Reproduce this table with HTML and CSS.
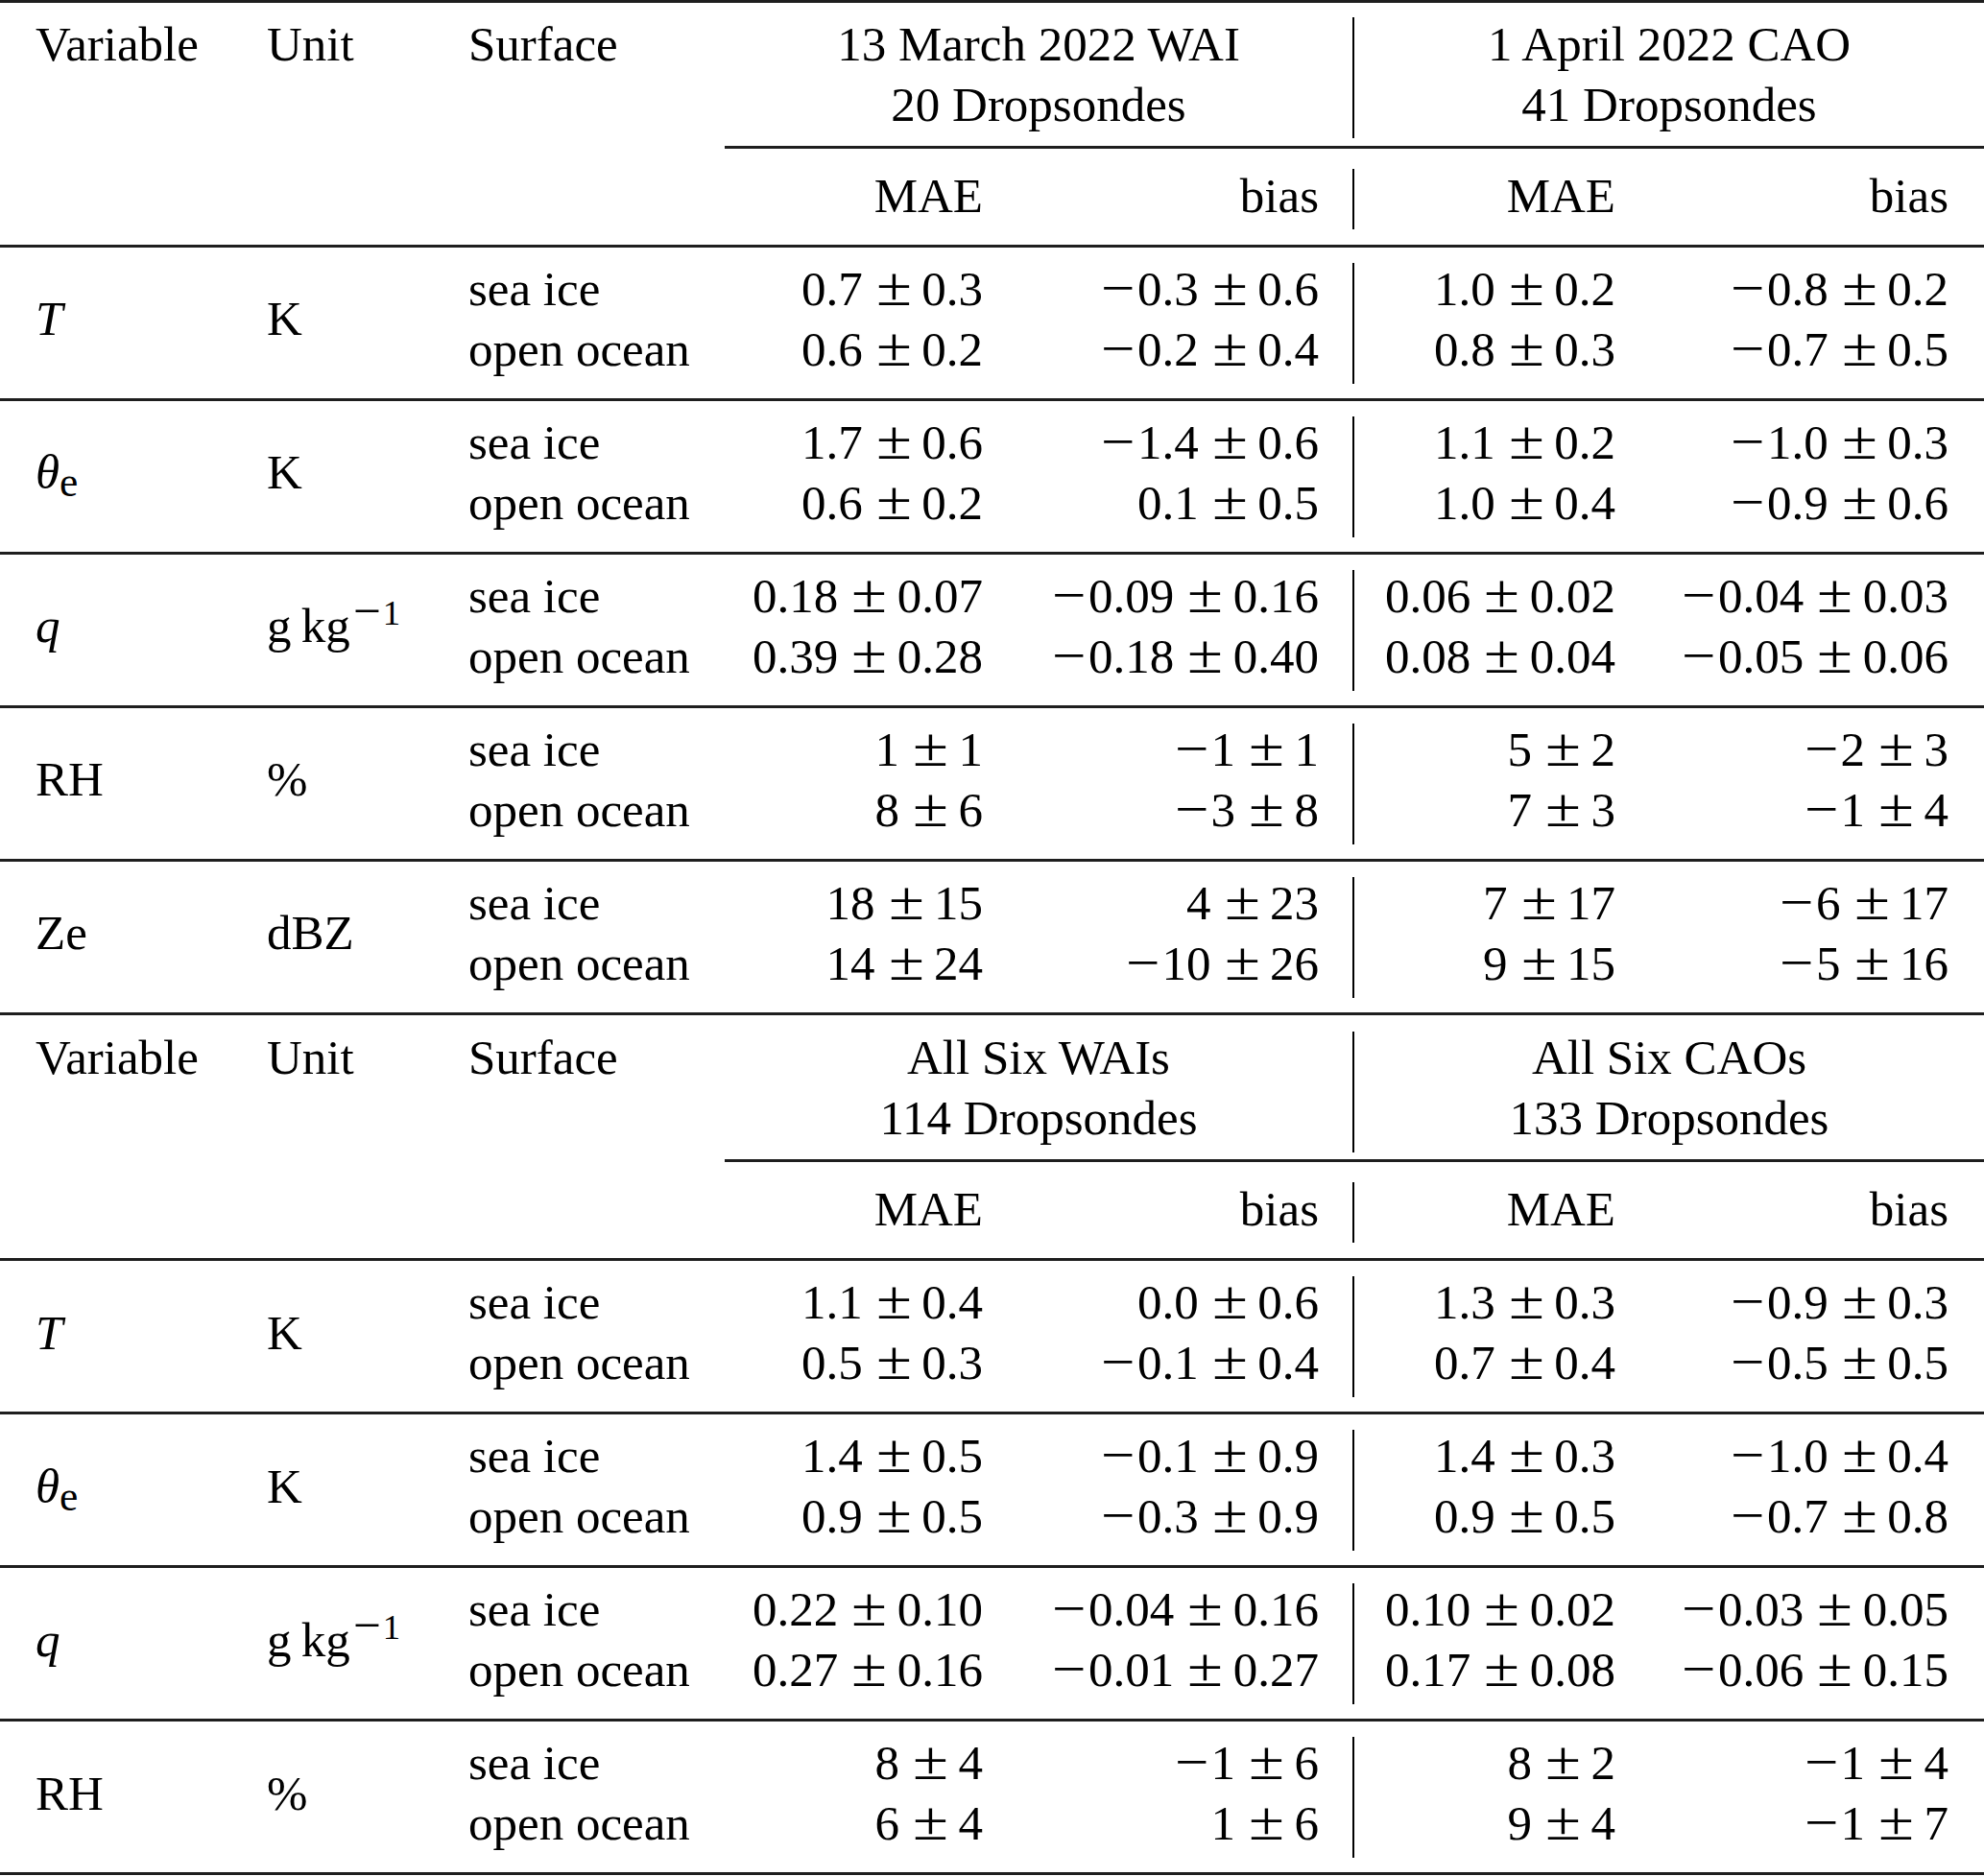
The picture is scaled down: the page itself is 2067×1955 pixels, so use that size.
FILE: index.html
```html
<!DOCTYPE html>
<html lang="en">
<head>
<meta charset="utf-8">
<title>Dropsonde comparison statistics</title>
<link rel="stylesheet" href="styles.css">
</head>
<body>
<table class="stats">
  <colgroup>
    <col class="w1"><col class="w2"><col class="w3"><col class="w4"><col class="w5"><col class="w6"><col class="w7">
  </colgroup>
  <tbody>
    <tr class="hd1">
      <td class="k1">Variable</td><td class="k2">Unit</td><td class="k3">Surface</td>
      <td colspan="2" class="g1 vr">13 March 2022 WAI<br>20 Dropsondes</td>
      <td colspan="2" class="g2">1 April 2022 CAO<br>41 Dropsondes</td>
    </tr>
    <tr class="hd2">
      <td class="k1"></td><td class="k2"></td><td class="k3"></td>
      <td class="k4 cm">MAE</td><td class="k5 cm vr">bias</td><td class="k6 cm">MAE</td><td class="k7 cm">bias</td>
    </tr>
    <tr class="dr">
      <td class="k1 mid"><i>T</i></td><td class="k2 mid">K</td><td class="k3">sea ice<br>open ocean</td>
      <td class="k4">0.7<span class="pm">±</span>0.3<br>0.6<span class="pm">±</span>0.2</td>
      <td class="k5 vr"><span class="mi">−</span>0.3<span class="pm">±</span>0.6<br><span class="mi">−</span>0.2<span class="pm">±</span>0.4</td>
      <td class="k6">1.0<span class="pm">±</span>0.2<br>0.8<span class="pm">±</span>0.3</td>
      <td class="k7"><span class="mi">−</span>0.8<span class="pm">±</span>0.2<br><span class="mi">−</span>0.7<span class="pm">±</span>0.5</td>
    </tr>
    <tr class="dr">
      <td class="k1 mid"><i>θ</i><sub class="sb">e</sub></td><td class="k2 mid">K</td><td class="k3">sea ice<br>open ocean</td>
      <td class="k4">1.7<span class="pm">±</span>0.6<br>0.6<span class="pm">±</span>0.2</td>
      <td class="k5 vr"><span class="mi">−</span>1.4<span class="pm">±</span>0.6<br>0.1<span class="pm">±</span>0.5</td>
      <td class="k6">1.1<span class="pm">±</span>0.2<br>1.0<span class="pm">±</span>0.4</td>
      <td class="k7"><span class="mi">−</span>1.0<span class="pm">±</span>0.3<br><span class="mi">−</span>0.9<span class="pm">±</span>0.6</td>
    </tr>
    <tr class="dr">
      <td class="k1 mid"><i>q</i></td><td class="k2 mid">g&#8201;kg<sup class="sp"><span class="smi">−</span>1</sup></td><td class="k3">sea ice<br>open ocean</td>
      <td class="k4">0.18<span class="pm">±</span>0.07<br>0.39<span class="pm">±</span>0.28</td>
      <td class="k5 vr"><span class="mi">−</span>0.09<span class="pm">±</span>0.16<br><span class="mi">−</span>0.18<span class="pm">±</span>0.40</td>
      <td class="k6">0.06<span class="pm">±</span>0.02<br>0.08<span class="pm">±</span>0.04</td>
      <td class="k7"><span class="mi">−</span>0.04<span class="pm">±</span>0.03<br><span class="mi">−</span>0.05<span class="pm">±</span>0.06</td>
    </tr>
    <tr class="dr">
      <td class="k1 mid">RH</td><td class="k2 mid">%</td><td class="k3">sea ice<br>open ocean</td>
      <td class="k4">1<span class="pm">±</span>1<br>8<span class="pm">±</span>6</td>
      <td class="k5 vr"><span class="mi">−</span>1<span class="pm">±</span>1<br><span class="mi">−</span>3<span class="pm">±</span>8</td>
      <td class="k6">5<span class="pm">±</span>2<br>7<span class="pm">±</span>3</td>
      <td class="k7"><span class="mi">−</span>2<span class="pm">±</span>3<br><span class="mi">−</span>1<span class="pm">±</span>4</td>
    </tr>
    <tr class="dr">
      <td class="k1 mid">Ze</td><td class="k2 mid">dBZ</td><td class="k3">sea ice<br>open ocean</td>
      <td class="k4">18<span class="pm">±</span>15<br>14<span class="pm">±</span>24</td>
      <td class="k5 vr">4<span class="pm">±</span>23<br><span class="mi">−</span>10<span class="pm">±</span>26</td>
      <td class="k6">7<span class="pm">±</span>17<br>9<span class="pm">±</span>15</td>
      <td class="k7"><span class="mi">−</span>6<span class="pm">±</span>17<br><span class="mi">−</span>5<span class="pm">±</span>16</td>
    </tr>
    <tr class="hd1b">
      <td class="k1">Variable</td><td class="k2">Unit</td><td class="k3">Surface</td>
      <td colspan="2" class="g1 vr">All Six WAIs<br>114 Dropsondes</td>
      <td colspan="2" class="g2">All Six CAOs<br>133 Dropsondes</td>
    </tr>
    <tr class="hd2">
      <td class="k1"></td><td class="k2"></td><td class="k3"></td>
      <td class="k4 cm">MAE</td><td class="k5 cm vr">bias</td><td class="k6 cm">MAE</td><td class="k7 cm">bias</td>
    </tr>
    <tr class="dr">
      <td class="k1 mid"><i>T</i></td><td class="k2 mid">K</td><td class="k3">sea ice<br>open ocean</td>
      <td class="k4">1.1<span class="pm">±</span>0.4<br>0.5<span class="pm">±</span>0.3</td>
      <td class="k5 vr">0.0<span class="pm">±</span>0.6<br><span class="mi">−</span>0.1<span class="pm">±</span>0.4</td>
      <td class="k6">1.3<span class="pm">±</span>0.3<br>0.7<span class="pm">±</span>0.4</td>
      <td class="k7"><span class="mi">−</span>0.9<span class="pm">±</span>0.3<br><span class="mi">−</span>0.5<span class="pm">±</span>0.5</td>
    </tr>
    <tr class="dr">
      <td class="k1 mid"><i>θ</i><sub class="sb">e</sub></td><td class="k2 mid">K</td><td class="k3">sea ice<br>open ocean</td>
      <td class="k4">1.4<span class="pm">±</span>0.5<br>0.9<span class="pm">±</span>0.5</td>
      <td class="k5 vr"><span class="mi">−</span>0.1<span class="pm">±</span>0.9<br><span class="mi">−</span>0.3<span class="pm">±</span>0.9</td>
      <td class="k6">1.4<span class="pm">±</span>0.3<br>0.9<span class="pm">±</span>0.5</td>
      <td class="k7"><span class="mi">−</span>1.0<span class="pm">±</span>0.4<br><span class="mi">−</span>0.7<span class="pm">±</span>0.8</td>
    </tr>
    <tr class="dr">
      <td class="k1 mid"><i>q</i></td><td class="k2 mid">g&#8201;kg<sup class="sp"><span class="smi">−</span>1</sup></td><td class="k3">sea ice<br>open ocean</td>
      <td class="k4">0.22<span class="pm">±</span>0.10<br>0.27<span class="pm">±</span>0.16</td>
      <td class="k5 vr"><span class="mi">−</span>0.04<span class="pm">±</span>0.16<br><span class="mi">−</span>0.01<span class="pm">±</span>0.27</td>
      <td class="k6">0.10<span class="pm">±</span>0.02<br>0.17<span class="pm">±</span>0.08</td>
      <td class="k7"><span class="mi">−</span>0.03<span class="pm">±</span>0.05<br><span class="mi">−</span>0.06<span class="pm">±</span>0.15</td>
    </tr>
    <tr class="dr">
      <td class="k1 mid">RH</td><td class="k2 mid">%</td><td class="k3">sea ice<br>open ocean</td>
      <td class="k4">8<span class="pm">±</span>4<br>6<span class="pm">±</span>4</td>
      <td class="k5 vr"><span class="mi">−</span>1<span class="pm">±</span>6<br>1<span class="pm">±</span>6</td>
      <td class="k6">8<span class="pm">±</span>2<br>9<span class="pm">±</span>4</td>
      <td class="k7"><span class="mi">−</span>1<span class="pm">±</span>4<br><span class="mi">−</span>1<span class="pm">±</span>7</td>
    </tr>
  </tbody>
</table>
</body>
</html>
```

FILE: styles.css
```css
html, body {
  margin: 0;
  padding: 0;
  background: #ffffff;
}

.stats {
  width: 2067px;
  table-layout: fixed;
  border-collapse: separate;
  border-spacing: 0;
  font-family: "Liberation Serif", "Times New Roman", serif;
  font-size: 51px;
  line-height: 63px;
  color: #000000;
}

.w1 { width: 241px; }
.w2 { width: 210px; }
.w3 { width: 304px; }
.w4 { width: 305px; }
.w5 { width: 351px; }
.w6 { width: 308px; }
.w7 { width: 348px; }

.stats td {
  padding: 0;
  vertical-align: top;
  white-space: nowrap;
}

/* column alignment */
.stats td.k1,
.stats td.k2,
.stats td.k3 {
  text-align: left;
  padding-left: 37px;
}
.stats td.k4 { text-align: right; padding-right: 36px; }
.stats td.k5 { text-align: right; padding-right: 37px; }
.stats td.k6 { text-align: right; padding-right: 36px; }
.stats td.k7 { text-align: right; padding-right: 37px; }

.stats td.g1 { text-align: center; padding-right: 2px; }
.stats td.g2 { text-align: center; }

.stats td.mid { vertical-align: middle; }

/* vertical rule between the two groups (with booktabs style gaps) */
.stats td.vr {
  background-image: linear-gradient(#000000, #000000);
  background-repeat: no-repeat;
  background-size: 2px 126px;
  background-position: right 0 top 15.3px;
}

/* first header line (with top rule) */
.hd1 td {
  border-top: 3px solid #1e1e1e;
  padding-top: 11.7px;
  padding-bottom: 11.6px;
}

/* header line of the second block */
.hd1b td {
  padding-top: 13.1px;
  padding-bottom: 11.2px;
}
.hd1b td.vr { background-position: right 0 top 16.7px; }

/* MAE / bias line */
.hd2 td {
  padding-top: 17.4px;
  padding-bottom: 19.6px;
  border-bottom: 3px solid #1e1e1e;
}
.hd2 td.cm { border-top: 3px solid #1e1e1e; }
.hd2 td.vr {
  background-size: 2px 63.3px;
  background-position: right 0 top 21px;
}

/* data rows */
.dr td {
  padding-top: 11.7px;
  padding-bottom: 19.3px;
  border-bottom: 3px solid #1e1e1e;
}

/* math-like glyphs */
.pm {
  display: inline-block;
  font-size: 1.1em;
  line-height: 1;
  transform: scaleX(1.2);
  margin: 0 13.5px 0 17.3px;
}
.mi {
  display: inline-block;
  font-size: 1.1em;
  line-height: 1;
  transform: scaleX(1.12);
  vertical-align: -1px;
  margin: 0 4px 0 3px;
}
.sb {
  font-size: 0.85em;
  line-height: 0;
  vertical-align: -8px;
}
.sp {
  font-size: 0.72em;
  line-height: 0;
  vertical-align: 18px;
  margin-left: 3px;
}
.smi {
  font-size: 1.4em;
  line-height: 0;
  vertical-align: -3px;
  margin-right: 2px;
}
```
